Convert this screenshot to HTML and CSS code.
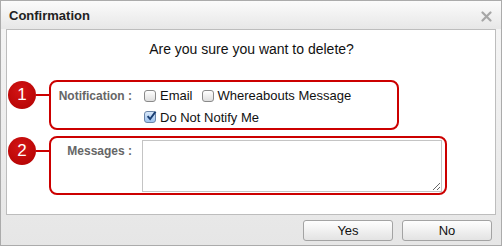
FILE: index.html
```html
<!DOCTYPE html>
<html lang="en">
<head>
  <meta charset="UTF-8" />
  <title>Confirmation</title>
  <link rel="stylesheet" href="styles.css">
</head>
<body>
<div class="dialog">
  <div class="header">
    <span class="title">Confirmation</span>
    <svg class="close" width="11" height="11" viewBox="0 0 11 11">
      <path d="M1.5 1.5 L9.5 9.5 M9.5 1.5 L1.5 9.5" stroke="#a6a6a6" stroke-width="2.2" stroke-linecap="round"/>
    </svg>
  </div>

  <div class="panel">
    <p class="question">Are you sure you want to delete?</p>

    <div class="callout">
      <span class="badge">1</span>
      <span class="connector"></span>
      <div class="box box-notify">
        <div class="label">Notification :</div>
        <div class="options">
          <div class="option-row">
            <label class="option"><span class="check"></span>Email</label>
            <label class="option"><span class="check"></span>Whereabouts Message</label>
          </div>
          <div class="option-row">
            <label class="option"><span class="check checked">
              <svg width="12" height="12" viewBox="0 0 12 12"><path d="M2.6 6.2 L5.1 9 L10.6 1.6" fill="none" stroke="#1b3f73" stroke-width="1.9"/></svg>
            </span>Do Not Notify Me</label>
          </div>
        </div>
      </div>
    </div>

    <div class="callout">
      <span class="badge">2</span>
      <span class="connector"></span>
      <div class="box box-msg">
        <div class="label">Messages :</div>
        <textarea class="messages"></textarea>
      </div>
    </div>
  </div>

  <div class="footer">
    <button class="btn">Yes</button>
    <button class="btn">No</button>
  </div>
</div>
</body>
</html>
```

FILE: styles.css
```css
/* Reset */
* {
  margin: 0;
  padding: 0;
  box-sizing: border-box;
}

body {
  font-family: "Liberation Sans", Arial, sans-serif;
  font-size: 13px;
  color: #111;
  background: #fff;
}

/* Dialog frame */
.dialog {
  width: 502px;
  height: 246px;
  border: 1px solid #ababab;
  background: linear-gradient(#f6f6f6, #e6e6e6);
  display: flex;
  flex-direction: column;
}

.header {
  height: 28px;
  flex: 0 0 28px;
  display: flex;
  align-items: center;
  justify-content: space-between;
  padding: 0 9px 0 8px;
  background: linear-gradient(#fbfbfb, #e7e7e7);
}

.title {
  font-weight: bold;
  font-size: 13px;
  color: #222;
  margin-top: 1px;
}

.close {
  margin-top: 3px;
}

/* White content area */
.panel {
  margin: 0 5px;
  height: 186px;
  border: 1px solid #bdbdbd;
  background: #fff;
  padding: 10px 0 0 1px;
}

.question {
  text-align: center;
  font-size: 14px;
  line-height: 18px;
  margin-bottom: 22px;
}

/* Numbered red callouts */
.callout {
  display: flex;
  align-items: flex-start;
  margin-bottom: 6px;
}

.badge {
  flex: 0 0 28px;
  width: 28px;
  height: 28px;
  margin-top: 1px;
  border-radius: 50%;
  background: radial-gradient(circle at 45% 35%, #d31515, #b00000);
  color: #fff;
  font-size: 17px;
  line-height: 28px;
  text-align: center;
}

.connector {
  width: 13px;
  height: 2px;
  margin-top: 14px;
  background: #cc0000;
}

.box {
  border: 2px solid #cc0000;
  border-radius: 8px;
  display: flex;
}

.box-notify {
  width: 350px;
  height: 50px;
  padding-top: 3px;
}

.box-msg {
  width: 398px;
  height: 59px;
  padding-top: 2px;
}

.label {
  width: 90px;
  flex: 0 0 90px;
  text-align: right;
  padding-right: 9px;
  font-weight: bold;
  font-size: 12px;
  color: #666;
  line-height: 22px;
}

.box-msg .label {
  line-height: 22px;
}

.options {
  display: flex;
  flex-direction: column;
  padding-left: 3px;
}

.option-row {
  display: flex;
  gap: 9px;
  height: 23px;
  align-items: center;
}

.option {
  display: flex;
  align-items: center;
  font-size: 13px;
  color: #111;
}

.check {
  width: 12px;
  height: 12px;
  margin-right: 4px;
  border: 1px solid #8a8a8a;
  border-radius: 3px;
  background: linear-gradient(#ffffff, #dedede);
  position: relative;
}

.check.checked {
  background: linear-gradient(#d8e8fa, #9fc3ee);
  border-color: #6b85a8;
}

.check svg {
  position: absolute;
  left: 0;
  top: -2px;
}

.messages {
  width: 300px;
  height: 52px;
  margin-left: 1px;
  border: 1px solid #c4c4c4;
  resize: both;
  font-family: inherit;
}

/* Footer buttons */
.footer {
  flex: 1;
  display: flex;
  justify-content: flex-end;
  align-items: flex-start;
  gap: 9px;
  padding: 5px 9px 0 0;
}

.btn {
  width: 90px;
  height: 21px;
  border: 1px solid #a3a3a3;
  border-radius: 3px;
  background: linear-gradient(#fefefe, #e3e3e3);
  font-family: inherit;
  font-size: 13px;
  color: #111;
}
```
